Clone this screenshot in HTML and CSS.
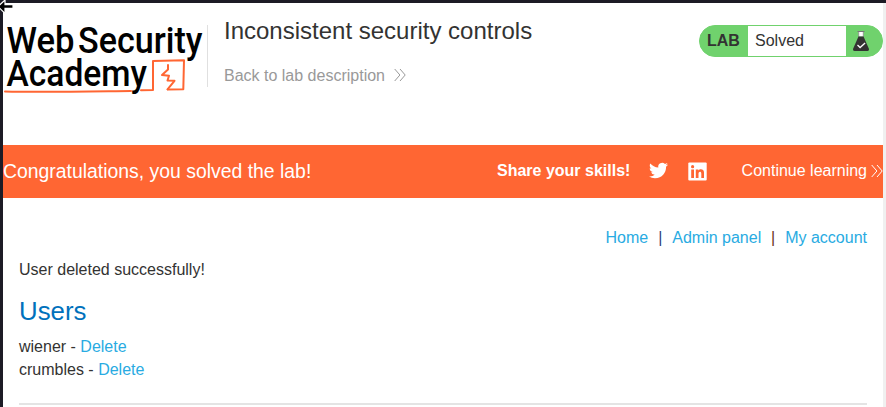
FILE: index.html
```html
<!DOCTYPE html>
<html lang="en">
<head>
<meta charset="utf-8">
<title>Inconsistent security controls</title>
<link rel="stylesheet" href="styles.css">
</head>
<body>
<svg class="cursor" width="16" height="16" viewBox="0 0 16 16"><path d="M-2 6.500 5 0v4.700h8v3.600H5V13.500z" fill="#000" stroke="#fff" stroke-width="1.200"/></svg>
<div class="page">
  <header class="header">
    <svg class="logo" width="204" height="80" viewBox="3 20 204 80" role="img" aria-label="Web Security Academy">
      <g class="logo-text">
        <text x="6.500" y="53.300" textLength="68" lengthAdjust="spacingAndGlyphs">Web</text>
        <text x="78" y="53.300" textLength="124.500" lengthAdjust="spacingAndGlyphs">Security</text>
        <text x="6.500" y="86" textLength="140.500" lengthAdjust="spacingAndGlyphs">Academy</text>
      </g>
      <g fill="none" stroke="#ff6633" stroke-width="2" stroke-linejoin="round" stroke-linecap="round">
        <path d="M5 91.500C40 92.500 90 91.500 131 91"/>
        <path d="M141 90.300 153 90V61l31-.7-.7 29-15.600.2"/>
        <path d="M168 65V69.500L162 75l7 .8-1.500 4.700 7 .3-7 8.500"/>
      </g>
    </svg>
    <div class="heading">
      <h1>Inconsistent security controls</h1>
      <a class="back">Back to lab description<svg width="12" height="14" viewBox="0 0 12 14"><path d="m.7 1 5.200 6-5.200 6M6 1l5.200 6L6 13"/></svg></a>
    </div>
    <div class="lab">
      <b>LAB</b><span class="status">Solved</span>
      <svg width="36" height="30" viewBox="0 0 36 30"><path d="M12.500 5.500h5v5h-5z" fill="#fff"/><path d="M11.500 5h7v1h-7z" fill="#777"/><path d="M12.700 6v5M17.300 6v5" stroke="#777" stroke-width=".7"/><path d="M12.500 10.500h5l5.500 12.500q.3 2-1.500 2h-13q-1.800 0-1.500-2z" fill="#333332"/><path d="m11.500 19 2.600 2.500 5-4.500" fill="none" stroke="#fff" stroke-width="1.300"/></svg>
    </div>
  </header>
  <section class="banner">
    <p class="congrats">Congratulations, you solved the lab!</p>
    <b class="share">Share your skills!</b>
    <svg class="twitter" width="19" height="19" viewBox="0 0 24 24"><path fill="#fff" d="M23.950 4.570a10 10 0 0 1-2.820.77 4.960 4.960 0 0 0 2.160-2.720c-.95.560-2 .96-3.120 1.180a4.920 4.920 0 0 0-8.390 4.480C7.690 8.100 4.070 6.130 1.640 3.160a4.800 4.800 0 0 0-.67 2.480c0 1.710.87 3.210 2.190 4.090a4.900 4.900 0 0 1-2.230-.61v.06a4.920 4.920 0 0 0 3.950 4.830 5 5 0 0 1-2.210.08 4.940 4.940 0 0 0 4.600 3.420A9.870 9.870 0 0 1 0 19.540a13.990 13.990 0 0 0 7.550 2.210c9.050 0 14-7.500 14-13.980 0-.21 0-.42-.02-.63a9.940 9.940 0 0 0 2.460-2.550z"/></svg>
    <svg class="linkedin" width="19" height="19" viewBox="0 0 19 19"><rect x=".3" y=".5" width="18.400" height="18" rx="1" fill="#fff"/><g fill="#ff6633"><circle cx="4.600" cy="4.700" r="1.600"/><path d="M3.200 7.400H6V16H3.200zM7.800 7.400h2.600v1.200c1.300-2.200 5.600-1.900 5.600 2V16h-2.700v-4.200c0-2.800-2.800-2.500-2.800 0V16H7.800z"/></g></svg>
    <a class="continue">Continue learning<svg width="12" height="14" viewBox="0 0 12 14"><path d="m.7 1 5.200 6-5.200 6M6 1l5.200 6L6 13"/></svg></a>
  </section>
  <main class="content">
    <nav class="nav"><a>Home</a><span class="sep-blue">|</span><a>Admin panel</a><span class="sep-brown">|</span><a>My account</a></nav>
    <p class="message">User deleted successfully!</p>
    <h2>Users</h2>
    <p class="user">wiener - <a>Delete</a></p>
    <p class="user">crumbles - <a>Delete</a></p>
    <hr>
  </main>
</div>
</body>
</html>
```
FILE: styles.css
```css
* { box-sizing: border-box; }
body {
  margin: 0;
  height: 407px;
  overflow: hidden;
  background: #f0f0f0;
  border-top: 3px solid #1c1b25;
  border-left: 3px solid #1c1b25;
  font: 16px/23px "Liberation Sans", Arial, sans-serif;
  color: #333332;
}
h1, h2, p { margin: 0; font-weight: 400; }
.cursor { position: absolute; left: 0; top: 0; }
.page { width: 880px; height: 404px; background: #fff; }
.header { display: flex; align-items: flex-start; height: 142px; padding-top: 17px; }
.logo { flex: none; overflow: visible; }
.logo-text { font: 500 36.5px Roboto, sans-serif; fill: #000; }
.heading { height: 62px; margin-top: 5px; padding-left: 16px; border-left: 1px solid #e0e0e0; }
h1 { font-size: 24px; line-height: 28px; margin-top: -8px; }
.back { display: flex; align-items: center; gap: 9px; margin-top: 19px; color: #999; }
.back svg { margin-top: -1px; }
.back svg, .continue svg { fill: none; stroke: currentColor; stroke-width: 1; }
.lab {
  display: flex;
  width: 184px;
  height: 32px;
  margin: 5px 0 0 auto;
  border: 1px solid #70d26d;
  border-radius: 16px;
  background: #70d26d;
  line-height: 30px;
}
.lab b { width: 48px; padding-left: 7px; }
.status { width: 98px; padding-left: 7px; background: #fff; }
.banner { display: flex; align-items: center; height: 53px; padding-bottom: 2px; background: #ff6633; color: #fff; }
.congrats { font-size: 19.4px; width: 494px; padding-top: 2px; }
.twitter { margin-left: 19px; }
.linkedin { margin: 2px 0 0 20px; }
.continue { display: flex; align-items: center; gap: 4px; margin-left: auto; }
.content { padding: 28px 16px 0; }
.nav { display: flex; justify-content: flex-end; }
.nav span { width: 24px; text-align: center; }
.nav .sep-blue { color: #30407a; }
.nav .sep-brown { color: #6a3020; }
a { color: #29abe2; }
.continue { color: #fff; }
.message { margin-top: 9px; }
h2 { margin: 14px 0 8px; font-size: 25.8px; line-height: 32px; color: #0071bc; }
hr { margin: 22px 0 0; height: 2px; border: 0; background: #e4e4e4; }
```
